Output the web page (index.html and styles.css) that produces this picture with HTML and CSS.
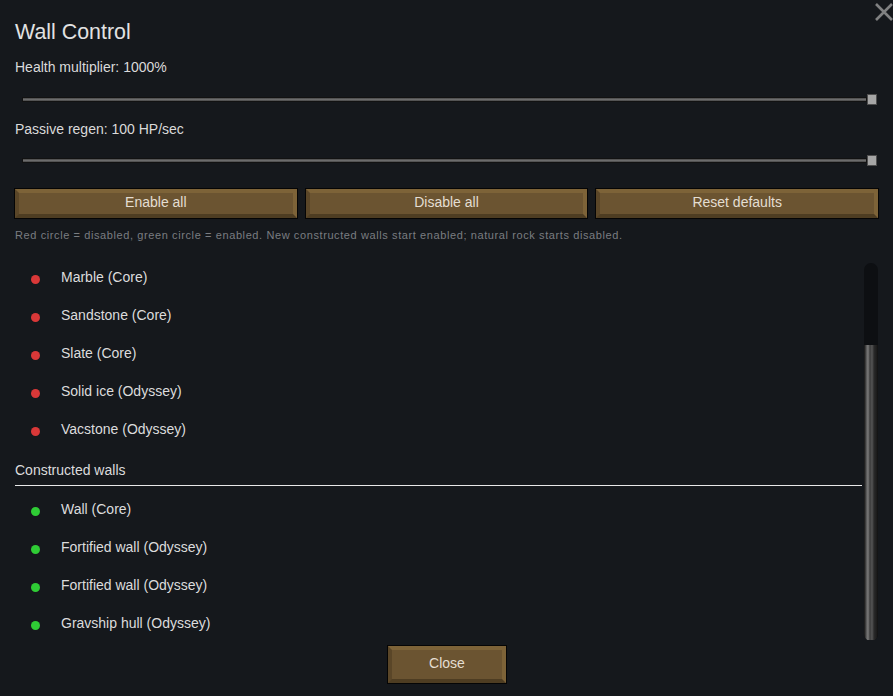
FILE: index.html
```html
<!DOCTYPE html>
<html>
<head>
<meta charset="utf-8">
<title>Wall Control</title>
<link rel="stylesheet" href="styles.css">
</head>
<body>
<div class="window">
  <button class="close-x" aria-label="Close">
    <svg width="20" height="20" viewBox="0 0 20 20"><path d="M2 2 L18 18 M18 2 L2 18" stroke="#808182" stroke-width="2.6" fill="none"/></svg>
  </button>
  <h1 class="title">Wall Control</h1>
  <div class="label label-first">Health multiplier: 1000%</div>
  <div class="slider"><div class="track"></div><div class="thumb"></div></div>
  <div class="label label-second">Passive regen: 100 HP/sec</div>
  <div class="slider slider-second"><div class="track"></div><div class="thumb"></div></div>
  <div class="btn-row">
    <button class="btn">Enable all</button>
    <button class="btn">Disable all</button>
    <button class="btn">Reset defaults</button>
  </div>
  <div class="hint">Red circle = disabled, green circle = enabled. New constructed walls start enabled; natural rock starts disabled.</div>
  <div class="list-area">
    <div class="list">
      <div class="row"><span class="dot off"></span><span class="name">Marble (Core)</span></div>
      <div class="row"><span class="dot off"></span><span class="name">Sandstone (Core)</span></div>
      <div class="row"><span class="dot off"></span><span class="name">Slate (Core)</span></div>
      <div class="row"><span class="dot off"></span><span class="name">Solid ice (Odyssey)</span></div>
      <div class="row"><span class="dot off"></span><span class="name">Vacstone (Odyssey)</span></div>
      <div class="section">Constructed walls</div>
      <div class="row"><span class="dot on"></span><span class="name">Wall (Core)</span></div>
      <div class="row"><span class="dot on"></span><span class="name">Fortified wall (Odyssey)</span></div>
      <div class="row"><span class="dot on"></span><span class="name">Fortified wall (Odyssey)</span></div>
      <div class="row"><span class="dot on"></span><span class="name">Gravship hull (Odyssey)</span></div>
    </div>
    <div class="scrollbar"><div class="scroll-thumb"></div></div>
  </div>
  <div class="footer"><button class="btn btn-close">Close</button></div>
</div>
</body>
</html>
```
FILE: styles.css
```css
html, body {
  margin: 0;
  padding: 0;
  background: #15181c;
  height: 100%;
  overflow: hidden;
}
body {
  font-family: "Liberation Sans", Arial, sans-serif;
  color: #dcdcdc;
}
.window {
  position: relative;
  padding: 20px 15px 0 15px;
  width: 863px;
}
.close-x {
  position: absolute;
  top: 2px;
  left: 874px;
  width: 20px;
  height: 20px;
  padding: 0;
  border: 0;
  background: none;
}
.close-x svg { display: block; }
.title {
  margin: 0;
  font-size: 21.4px;
  font-weight: normal;
  line-height: 24px;
  color: #e2e2e2;
}
.label {
  font-size: 14px;
  line-height: 18px;
  color: #dadada;
}
.label-first { margin-top: 14px; }
.label-second { margin-top: 16px; }
.slider {
  display: flex;
  align-items: center;
  height: 10px;
  margin: 18px 1px 0 7px;
}
.slider-second { margin-top: 17px; }
.track {
  flex: 1;
  height: 3px;
  border: 1px solid #121212;
  background: linear-gradient(#474747, #6c6c6c 50%, #474747);
}
.thumb {
  width: 8px;
  height: 9px;
  background: #a6a6a6;
  border: 1px solid #4e4e4e;
}
.btn-row {
  display: grid;
  grid-template-columns: 1fr 1fr 1fr;
  gap: 9px;
  margin-top: 24px;
}
.btn {
  height: 29px;
  box-sizing: border-box;
  background: #6b5431;
  border-style: solid;
  border-width: 4px;
  border-color: #7d6338 #7d6338 #4e3d22 #5a4628;
  outline: 1px solid #050505;
  color: #e4ded2;
  font-family: "Liberation Sans", Arial, sans-serif;
  font-size: 14px;
  padding: 0 0 2px 0;
  line-height: 17px;
}
.hint {
  margin-top: 10px;
  font-size: 11px;
  line-height: 14px;
  letter-spacing: 0.6px;
  color: #7a7d81;
  white-space: nowrap;
}
.list-area {
  display: flex;
  gap: 2px;
  height: 382px;
  margin-top: 16px;
  overflow: hidden;
}
.list {
  flex: 1;
  overflow: hidden;
}
.row {
  display: flex;
  align-items: center;
  height: 38px;
  font-size: 14px;
  line-height: 38px;
  color: #dcdcdc;
}
.dot {
  width: 9px;
  height: 9px;
  border-radius: 50%;
  margin: 4px 21px 0 16px;
}
.dot.off { background: #d93838; }
.dot.on { background: #2fcc35; }
.section {
  padding-top: 13px;
  padding-bottom: 6px;
  font-size: 14px;
  line-height: 18px;
  color: #dcdcdc;
  border-bottom: 1px solid #e8e8e8;
  margin-bottom: 4px;
}
.scrollbar {
  width: 14px;
  margin-top: 5px;
  height: 378px;
  border-radius: 7px;
  background: #0d0f12;
  display: flex;
  flex-direction: column;
}
.scroll-thumb {
  margin-top: 82px;
  flex: 1;
  border-radius: 0 0 7px 7px;
  background: linear-gradient(to right, #141414 0, #2c2c2c 1px, #6a6a6a 3px, #7a7a7a 4px, #3c3c3c 6px, #555 8px, #2a2a2a 10px, #1a1a1a 13px, #0f0f0f 14px);
}
.footer {
  display: flex;
  justify-content: center;
  margin-top: 6px;
}
.btn-close {
  width: 118px;
  height: 37px;
  margin-left: 1px;
}
```
